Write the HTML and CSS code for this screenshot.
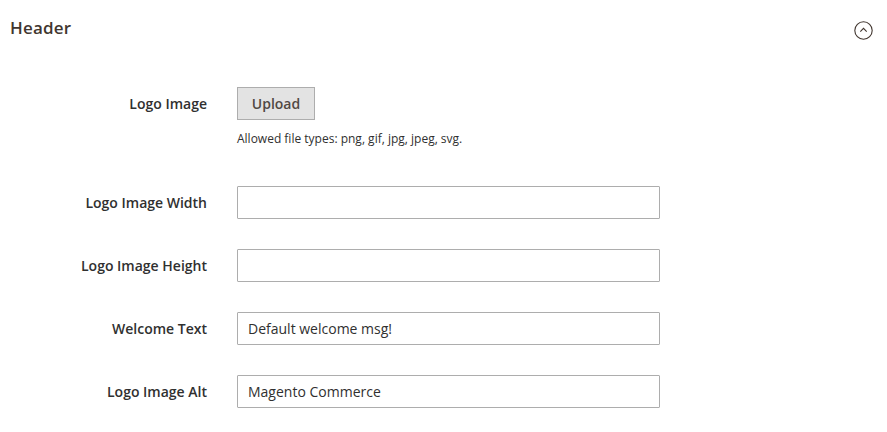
FILE: index.html
```html
<!DOCTYPE html>
<html lang="en">
<head>
<meta charset="utf-8">
<title>Header</title>
<link rel="stylesheet" href="styles.css">
</head>
<body>
<section class="block">
  <div class="block-header">
    <h2 class="block-title">Header</h2>
    <span class="collapse-icon" aria-label="Collapse">
      <svg width="19" height="19" viewBox="0 0 19 19">
        <circle cx="9.5" cy="9.5" r="8.7" fill="none" stroke="#41362f" stroke-width="1.1"/>
        <path d="M6.3 10.6 L9.5 7.4 L12.7 10.6" fill="none" stroke="#41362f" stroke-width="1.1"/>
      </svg>
    </span>
  </div>
  <div class="form">
    <div class="row row-upload">
      <label class="label">Logo Image</label>
      <div class="control">
        <button class="btn" type="button">Upload</button>
        <div class="note">Allowed file types: png, gif, jpg, jpeg, svg.</div>
      </div>
    </div>
    <div class="row">
      <label class="label">Logo Image Width</label>
      <div class="control"><input class="input" type="text" value=""></div>
    </div>
    <div class="row">
      <label class="label">Logo Image Height</label>
      <div class="control"><input class="input" type="text" value=""></div>
    </div>
    <div class="row">
      <label class="label">Welcome Text</label>
      <div class="control"><input class="input" type="text" value="Default welcome msg!"></div>
    </div>
    <div class="row">
      <label class="label">Logo Image Alt</label>
      <div class="control"><input class="input" type="text" value="Magento Commerce"></div>
    </div>
  </div>
</section>
</body>
</html>
```
FILE: styles.css
```css
html, body {
  margin: 0;
  padding: 0;
  background: #ffffff;
}
body {
  font-family: "Open Sans", "Liberation Sans", sans-serif;
  color: #303030;
}
.block-header {
  display: flex;
  justify-content: space-between;
  align-items: flex-start;
  padding: 18px 14px 0 10px;
}
.block-title {
  margin: 0;
  font-size: 17px;
  line-height: 20px;
  font-weight: 600;
  color: #41362f;
  letter-spacing: 0.2px;
}
.collapse-icon {
  display: block;
  width: 19px;
  height: 19px;
  margin-top: 3px;
}
.collapse-icon svg {
  display: block;
}
.form {
  display: flex;
  flex-direction: column;
  gap: 30px;
  margin-top: 47px;
}
.row {
  display: grid;
  grid-template-columns: 207px 423px;
  column-gap: 30px;
  align-items: start;
}
.row-upload {
  margin-bottom: 8px;
}
.label {
  display: block;
  text-align: right;
  font-size: 14px;
  line-height: 33px;
  font-weight: 600;
  color: #303030;
}
.control {
  display: flex;
  flex-direction: column;
  align-items: flex-start;
}
.btn {
  box-sizing: border-box;
  width: 78px;
  height: 33px;
  padding: 0;
  border: 1px solid #adadad;
  background: #e3e3e3;
  color: #514943;
  font-family: "Open Sans", "Liberation Sans", sans-serif;
  font-size: 14px;
  font-weight: 600;
  line-height: 31px;
  text-align: center;
  border-radius: 0;
}
.note {
  margin-top: 10px;
  font-size: 12px;
  line-height: 18px;
  color: #303030;
}
.input {
  box-sizing: border-box;
  width: 423px;
  height: 33px;
  margin: 0;
  padding: 0 10px;
  border: 1px solid #adadad;
  border-radius: 1px;
  background: #ffffff;
  color: #303030;
  font-family: "Open Sans", "Liberation Sans", sans-serif;
  font-size: 14px;
  font-weight: 400;
  line-height: 31px;
  outline: none;
}
```
